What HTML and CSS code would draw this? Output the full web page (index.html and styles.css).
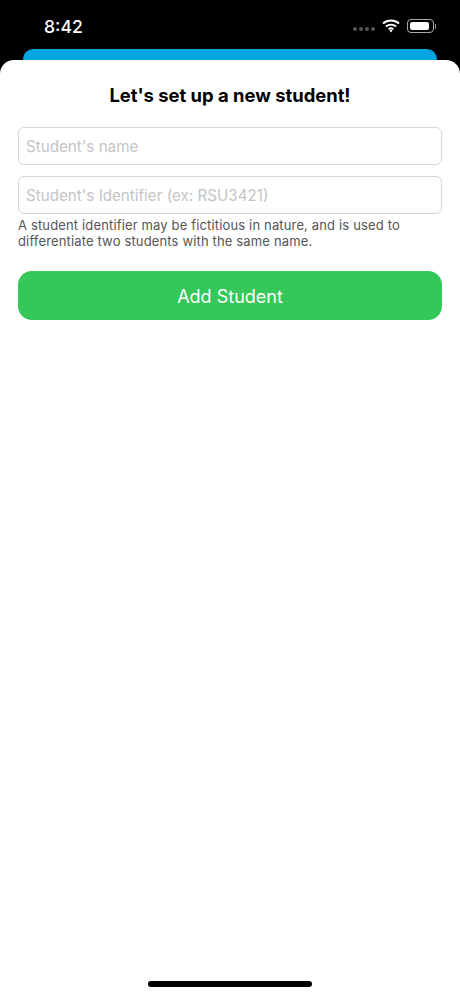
FILE: index.html
```html
<!DOCTYPE html>
<html lang="en">

<head>
  <meta charset="UTF-8">
  <title>Add Student</title>
  <link rel="stylesheet" href="styles.css">
</head>

<body>
  <div class="phone">
    <div class="status-bar">
      <div class="status-time">8:42</div>
      <div class="status-icons">
        <div class="status-dots">
          <span></span><span></span><span></span><span></span>
        </div>
        <svg class="status-wifi" width="18" height="14" viewBox="0 0 18 14">
          <path d="M1 4.6C5.5 0.6 12.5 0.6 17 4.6" fill="none" stroke="#fff" stroke-width="2" />
          <path d="M3.9 7.6C6.9 5 11.1 5 14.1 7.6" fill="none" stroke="#fff" stroke-width="2" />
          <path d="M6.6 10.3C8 9.1 10 9.1 11.4 10.3" fill="none" stroke="#fff" stroke-width="1.9" />
          <path d="M7.5 11.6L9 10.5L10.5 11.6L9 13.4Z" fill="#fff" />
        </svg>
        <div class="status-battery">
          <div class="status-battery-fill"></div>
        </div>
        <div class="status-battery-cap"></div>
      </div>
    </div>
    <div class="back-card"></div>
    <div class="sheet">
      <h1 class="sheet-title">Let's set up a new student!</h1>
      <input class="field" type="text" placeholder="Student's name" />
      <input class="field field-second" type="text" placeholder="Student's Identifier (ex: RSU3421)" />
      <p class="field-note">A student identifier may be fictitious in nature, and is used to differentiate two students with the same name.</p>
      <button class="btn-add">Add Student</button>
      <div class="home-indicator"></div>
    </div>
  </div>
</body>

</html>
```

FILE: styles.css
```css
* {
  box-sizing: border-box;
}

html,
body {
  margin: 0;
  height: 100%;
  background-color: #000;
}

body {
  font-family: Inter, "Liberation Sans", sans-serif;
}

.phone {
  display: flex;
  flex-direction: column;
  height: 996px;
}

/* status bar */
.status-bar {
  display: flex;
  justify-content: space-between;
  align-items: center;
  height: 49px;
  padding: 3px 24px 0 44px;
}

.status-time {
  color: #fff;
  font-size: 17.6px;
  font-weight: 500;
}

.status-icons {
  display: flex;
  align-items: center;
}

.status-dots {
  display: flex;
  gap: 2px;
  margin: 6px 7px 0 0;
}

.status-dots span {
  width: 4px;
  height: 4px;
  border-radius: 50%;
  background-color: #555;
}

.status-wifi {
  margin: -1px 7px 0 0;
}

.status-battery {
  width: 27px;
  height: 14px;
  padding: 2px 4px 2px 2px;
  border: 1px solid #aaa;
  border-radius: 4px;
}

.status-battery-fill {
  height: 100%;
  border-radius: 2px;
  background-color: #fff;
}

.status-battery-cap {
  width: 1px;
  height: 5px;
  margin-left: 1px;
  background-color: #888;
}

/* card behind the sheet */
.back-card {
  flex: none;
  height: 11px;
  margin: 0 23px;
  border-radius: 10px 10px 0 0;
  background-color: #05a5e0;
}

/* sheet */
.sheet {
  flex: 1;
  display: flex;
  flex-direction: column;
  padding: 0 18px 9px;
  border-radius: 14px 14px 0 0;
  background-color: #fff;
}

.sheet-title {
  margin: 23px 0 20px;
  height: 24px;
  color: #000;
  font-size: 18.4px;
  font-weight: 700;
  line-height: 24px;
  text-align: center;
}

.field {
  width: 100%;
  height: 38px;
  padding: 0 7px;
  border: 1.5px solid #d6d6d6;
  border-radius: 6px;
  background-color: #fff;
  font-family: inherit;
  font-size: 15.2px;
  outline: none;
}

.field::placeholder {
  color: #c4c4c6;
  opacity: 1;
}

.field-second {
  margin-top: 11px;
}

.field-note {
  margin: 4px 0 0;
  color: #555;
  font-size: 13px;
  letter-spacing: 0.15px;
  line-height: 15.5px;
}

.btn-add {
  width: 100%;
  height: 49px;
  margin-top: 22px;
  padding-top: 2px;
  border: 0;
  border-radius: 14px;
  background-color: #34c759;
  color: #fff;
  font-family: inherit;
  font-size: 18px;
}

.home-indicator {
  align-self: center;
  width: 164px;
  height: 6px;
  margin-top: auto;
  border-radius: 3px;
  background-color: #000;
}
```
